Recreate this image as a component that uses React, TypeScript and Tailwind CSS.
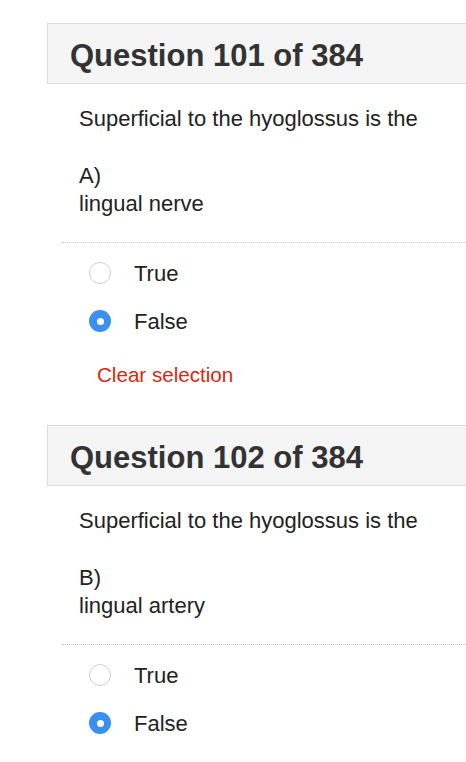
import React from "react";

type Q = { n: number; letter: string; answer: string };

const qs: Q[] = [
  { n: 101, letter: "A)", answer: "lingual nerve" },
  { n: 102, letter: "B)", answer: "lingual artery" },
];

function Radio({ checked }: { checked: boolean }) {
  return checked ? (
    <span className="flex h-[22px] w-[22px] shrink-0 items-center justify-center rounded-full bg-[#3b8ff0]">
      <span className="h-[7px] w-[7px] rounded-full bg-white" />
    </span>
  ) : (
    <span className="h-[22px] w-[22px] shrink-0 rounded-full border-[1.5px] border-[#cfcfcf] bg-white" />
  );
}

function Question({ q }: { q: Q }) {
  return (
    <div>
      <div className="-mr-6 flex h-[61px] items-center border border-[#dcdcdc] bg-[#f5f5f5] pl-[22px] pt-[4px]">
        <h2 className="text-[31px] font-bold leading-none text-[#333]">Question {q.n} of 384</h2>
      </div>
      <div className="pl-[32px] pt-[21px] text-[22px] leading-[28px] text-[#222]">
        <p>Superficial to the hyoglossus is the</p>
        <p className="mt-[29px]">{q.letter}</p>
        <p>{q.answer}</p>
      </div>
      <div className="-mr-6 ml-[15px] mt-[24px] border-t border-dotted border-[#c8c8c8]" />
      <div className="pl-[42px] pt-[19px]">
        <div className="flex h-[22px] items-center gap-[23px]">
          <Radio checked={false} />
          <span className="text-[22px] text-[#222]">True</span>
        </div>
        <div className="mt-[26px] flex h-[22px] items-center gap-[23px]">
          <Radio checked={true} />
          <span className="text-[22px] text-[#222]">False</span>
        </div>
      </div>
      <div className="pl-[50px] pt-[29px] text-[20.6px] leading-[28px] text-[#d8280f]">Clear selection</div>
    </div>
  );
}

export default function App() {
  return (
    <div className="h-[762px] overflow-hidden bg-white pl-[47px] pt-[23px] font-['Liberation_Sans',Arial,sans-serif]">
      <div className="flex flex-col gap-[36px]">
        {qs.map((q) => (
          <Question key={q.n} q={q} />
        ))}
      </div>
    </div>
  );
}
